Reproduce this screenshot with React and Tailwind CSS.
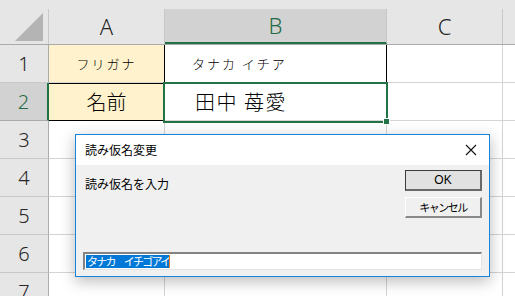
import React from 'react';

const jp = { fontFamily: '"Noto Sans CJK JP", "Noto Sans", sans-serif' };
const light = { fontFamily: '"Noto Sans CJK JP", "Noto Sans", sans-serif', fontWeight: 300 };
const latin = { fontFamily: '"Noto Sans", sans-serif', fontWeight: 300 };

function RowHeader({ n, active }) {
  return (
    <div
      className={`w-[49px] shrink-0 flex items-center justify-center border-r border-b text-[20px] ${
        active
          ? 'bg-[#d2d2d2] text-[#1e6b45] border-r-[#217346] border-r-2 border-b-[#ababab]'
          : 'bg-[#e6e6e6] text-[#262626] border-r-[#ababab] border-b-[#c8c8c8]'
      }`}
      style={latin}
    >
      {n}
    </div>
  );
}

function Cell({ w, className = '', children }) {
  return (
    <div className={`${w} shrink-0 border-r border-b border-[#d4d4d4] flex items-center ${className}`} style={light}>
      {children}
    </div>
  );
}

export default function App() {
  const rows = [3, 4, 5, 6, 7];
  return (
    <div className="relative w-[515px] h-[296px] overflow-hidden bg-white select-none" style={jp}>
      {/* top strip */}
      <div className="h-[9px] bg-[#e6e6e6]" />

      {/* column headers */}
      <div className="flex h-[36px] bg-[#e6e6e6] border-b border-[#ababab]">
        <div className="w-[49px] shrink-0 border-r border-[#c8c8c8] flex items-end justify-end pr-[5px] pb-[3px]">
          <div className="w-0 h-0 border-l-[28px] border-l-transparent border-b-[28px] border-b-[#b4b4b4]" />
        </div>
        <div className="w-[116px] shrink-0 border-r border-[#c8c8c8] flex items-center justify-center text-[22px] text-[#262626]" style={latin}>A</div>
        <div className="w-[222px] shrink-0 border-r border-[#c8c8c8] bg-[#d2d2d2] border-b-2 border-b-[#217346] flex items-center justify-center text-[22px] text-[#1e6b45]" style={latin}>B</div>
        <div className="w-[116px] shrink-0 border-r border-[#c8c8c8] flex items-center justify-center text-[22px] text-[#262626]" style={latin}>C</div>
        <div className="flex-1" />
      </div>

      {/* row 1 */}
      <div className="flex h-[38px]">
        <RowHeader n="1" />
        <Cell w="w-[116px]" className="bg-[#fff2cc] justify-center text-[13px] tracking-[2px] text-black !border-r-black">フリガナ</Cell>
        <Cell w="w-[222px]" className="pl-[27px] text-[13px] tracking-[2px] text-black !border-r-black !border-b-black">タナカ イチア</Cell>
        <Cell w="w-[116px]" />
        <div className="flex-1 border-b border-[#d4d4d4]" />
      </div>

      {/* row 2 */}
      <div className="flex h-[38px]">
        <RowHeader n="2" active />
        <Cell w="w-[116px]" className="bg-[#fff2cc] justify-center text-[20px] text-black !border-r-black !border-b-black border-t border-t-black">名前</Cell>
        <Cell w="w-[222px]" className="pl-[30px] text-[20px] tracking-[1.5px] text-black">田中 苺愛</Cell>
        <Cell w="w-[116px]" />
        <div className="flex-1 border-b border-[#d4d4d4]" />
      </div>

      {rows.map((r) => (
        <div key={r} className="flex h-[38px]">
          <RowHeader n={String(r)} />
          <Cell w="w-[116px]" />
          <Cell w="w-[222px]" />
          <Cell w="w-[116px]" />
          <div className="flex-1 border-b border-[#d4d4d4]" />
        </div>
      ))}

      {/* selection box B2 */}
      <div className="absolute left-[163px] top-[82px] w-[225px] h-[41px] border-2 border-[#217346] pointer-events-none" />
      <div className="absolute left-[383px] top-[118px] w-[7px] h-[7px] bg-[#217346] border border-white" />

      {/* dialog */}
      <div className="absolute left-[75px] top-[134px] w-[415px] h-[143px] border border-[#1883d7] bg-[#f0f0f0] shadow-[0_4px_14px_rgba(0,0,0,0.28)] flex flex-col">
        <div className="h-[30px] bg-white flex items-center justify-between pl-[9px] pr-[12px]">
          <span className="text-[12px] text-black">読み仮名変更</span>
          <svg width="12" height="12" viewBox="0 0 12 12">
            <path d="M1 1 L11 11 M11 1 L1 11" stroke="#111" strokeWidth="1.1" />
          </svg>
        </div>
        <div className="flex-1 relative">
          <div className="absolute left-[9px] top-[10px] text-[12px] text-black">読み仮名を入力</div>
          <div className="absolute left-[329px] top-[5px] w-[77px] flex flex-col gap-[6px]">
            <div className="h-[21px] bg-[#e1e1e1] border border-[#3c3c3c] border-r-2 border-b-2 border-r-[#696969] border-b-[#696969] flex items-center justify-center text-[12px] text-black" style={{ fontFamily: '"Liberation Sans", sans-serif' }}>
              OK
            </div>
            <div className="h-[21px] bg-[#f0f0f0] border border-t-white border-l-white border-r-2 border-b-2 border-r-[#898989] border-b-[#898989] flex items-center justify-center text-[11px] tracking-[-1.5px] text-black">
              キャンセル
            </div>
          </div>
          <div className="absolute left-[7px] top-[87px] w-[399px] h-[18px] bg-white border-t-2 border-l-2 border-[#838383] border-b border-r border-b-[#e3e3e3] border-r-[#e3e3e3] flex items-center pl-[1px]">
            <span className="bg-[#0078d7] text-white text-[11px] leading-[13px] pl-[1px] tracking-[-1.8px]">タナカ　イチゴアイ</span>
            <span className="w-[1px] h-[13px] bg-[#ff7a1a]" />
          </div>
        </div>
      </div>
    </div>
  );
}
